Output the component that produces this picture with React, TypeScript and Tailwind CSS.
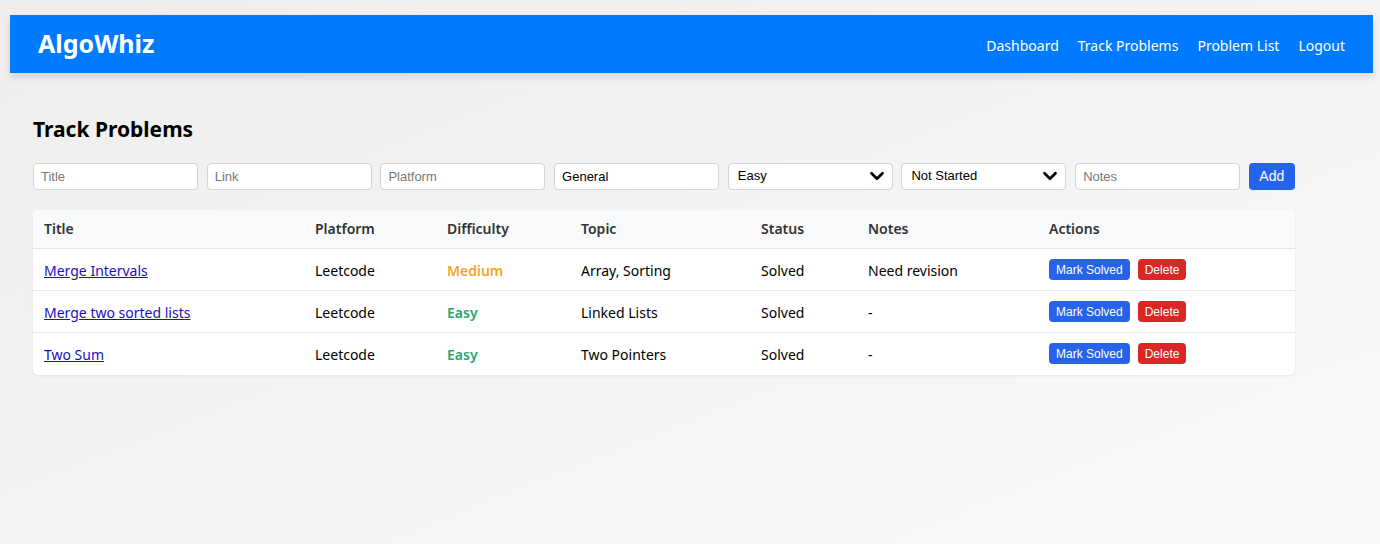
import { ChevronDown } from 'lucide-react'

type Problem = {
  title: string
  platform: string
  difficulty: 'Easy' | 'Medium' | 'Hard'
  topic: string
  status: string
  notes: string
}

const problems: Problem[] = [
  { title: 'Merge Intervals', platform: 'Leetcode', difficulty: 'Medium', topic: 'Array, Sorting', status: 'Solved', notes: 'Need revision' },
  { title: 'Merge two sorted lists', platform: 'Leetcode', difficulty: 'Easy', topic: 'Linked Lists', status: 'Solved', notes: '-' },
  { title: 'Two Sum', platform: 'Leetcode', difficulty: 'Easy', topic: 'Two Pointers', status: 'Solved', notes: '-' },
]

const ui = "font-['Segoe_UI','Noto_Sans',sans-serif]"
const field = "h-[27px] w-[165px] shrink-0 rounded-[4px] border border-[#d4d4d4] bg-white px-[7px] text-[13px] text-black font-['Liberation_Sans',Arial,sans-serif] placeholder:text-[#777] focus:outline-none"

function Select({ value }: { value: string }) {
  return (
    <div className={field + ' flex items-center justify-between pr-[4px]'}>
      <span className="pl-[2px]">{value}</span>
      <ChevronDown size={22} strokeWidth={3} className="text-black" />
    </div>
  )
}

export default function App() {
  return (
    <div className={`min-h-[544px] bg-gradient-to-br from-[#efeeec] to-[#f9f9f9] pt-[15px] ${ui}`}>
      <nav className="ml-[10px] mr-[7px] flex h-[58px] items-center justify-between bg-[#007bff] px-[28px] shadow-[0_4px_8px_rgba(0,0,0,0.12)]">
        <span className="text-[25px] font-bold text-white">AlgoWhiz</span>
        <div className="flex gap-[19px] pt-[2px] text-[14px] text-white">
          <a>Dashboard</a>
          <a>Track Problems</a>
          <a>Problem List</a>
          <a>Logout</a>
        </div>
      </nav>

      <main className="px-[33px] pt-[41px]">
        <h2 className="text-[21px] font-bold text-black">Track Problems</h2>

        <div className="mt-[17px] flex items-center gap-[8.7px]">
          <input className={field} placeholder="Title" />
          <input className={field} placeholder="Link" />
          <input className={field} placeholder="Platform" />
          <input className={field} defaultValue="General" />
          <Select value="Easy" />
          <Select value="Not Started" />
          <input className={field} placeholder="Notes" />
          <button className="h-[27px] w-[46px] rounded-[4px] bg-[#2563eb] text-[14px] text-white font-['Liberation_Sans',Arial,sans-serif]">
            Add
          </button>
        </div>

        <div className="mt-[20px] w-[1262px] overflow-hidden rounded-[5px] bg-white shadow-[0_1px_3px_rgba(0,0,0,0.06)]">
          <table className="w-full border-collapse text-left text-[14px]">
            <thead>
              <tr className="h-[39px] bg-[#f8f9fa] text-[#333] border-b border-[#e3e5e8]">
                <th className="w-[271px] pl-[11px] font-semibold">Title</th>
                <th className="w-[132px] pl-[11px] font-semibold">Platform</th>
                <th className="w-[134px] pl-[11px] font-semibold">Difficulty</th>
                <th className="w-[180px] pl-[11px] font-semibold">Topic</th>
                <th className="w-[107px] pl-[11px] font-semibold">Status</th>
                <th className="w-[181px] pl-[11px] font-semibold">Notes</th>
                <th className="pl-[11px] font-semibold">Actions</th>
              </tr>
            </thead>
            <tbody>
              {problems.map((p) => (
                <tr key={p.title} className="h-[42px] border-b border-[#e8e9eb] last:border-b-0 text-black">
                  <td className="pl-[11px] pt-[2px]">
                    <a className="text-[#1a0dcc] underline">{p.title}</a>
                  </td>
                  <td className="pl-[11px] pt-[2px]">{p.platform}</td>
                  <td
                    className={
                      'pl-[11px] pt-[2px] font-semibold ' +
                      (p.difficulty === 'Medium' ? 'text-[#f5a524]' : 'text-[#22a870]')
                    }
                  >
                    {p.difficulty}
                  </td>
                  <td className="pl-[11px] pt-[2px]">{p.topic}</td>
                  <td className="pl-[11px] pt-[2px]">{p.status}</td>
                  <td className="pl-[11px] pt-[2px]">{p.notes}</td>
                  <td className="pl-[11px]">
                    <div className="flex gap-[8px] font-['Liberation_Sans',Arial,sans-serif] text-[12px] text-white">
                      <button className="h-[21px] rounded-[4px] bg-[#2563eb] px-[7px]">Mark Solved</button>
                      <button className="h-[21px] rounded-[4px] bg-[#dc2626] px-[7px]">Delete</button>
                    </div>
                  </td>
                </tr>
              ))}
            </tbody>
          </table>
        </div>
      </main>
    </div>
  )
}
